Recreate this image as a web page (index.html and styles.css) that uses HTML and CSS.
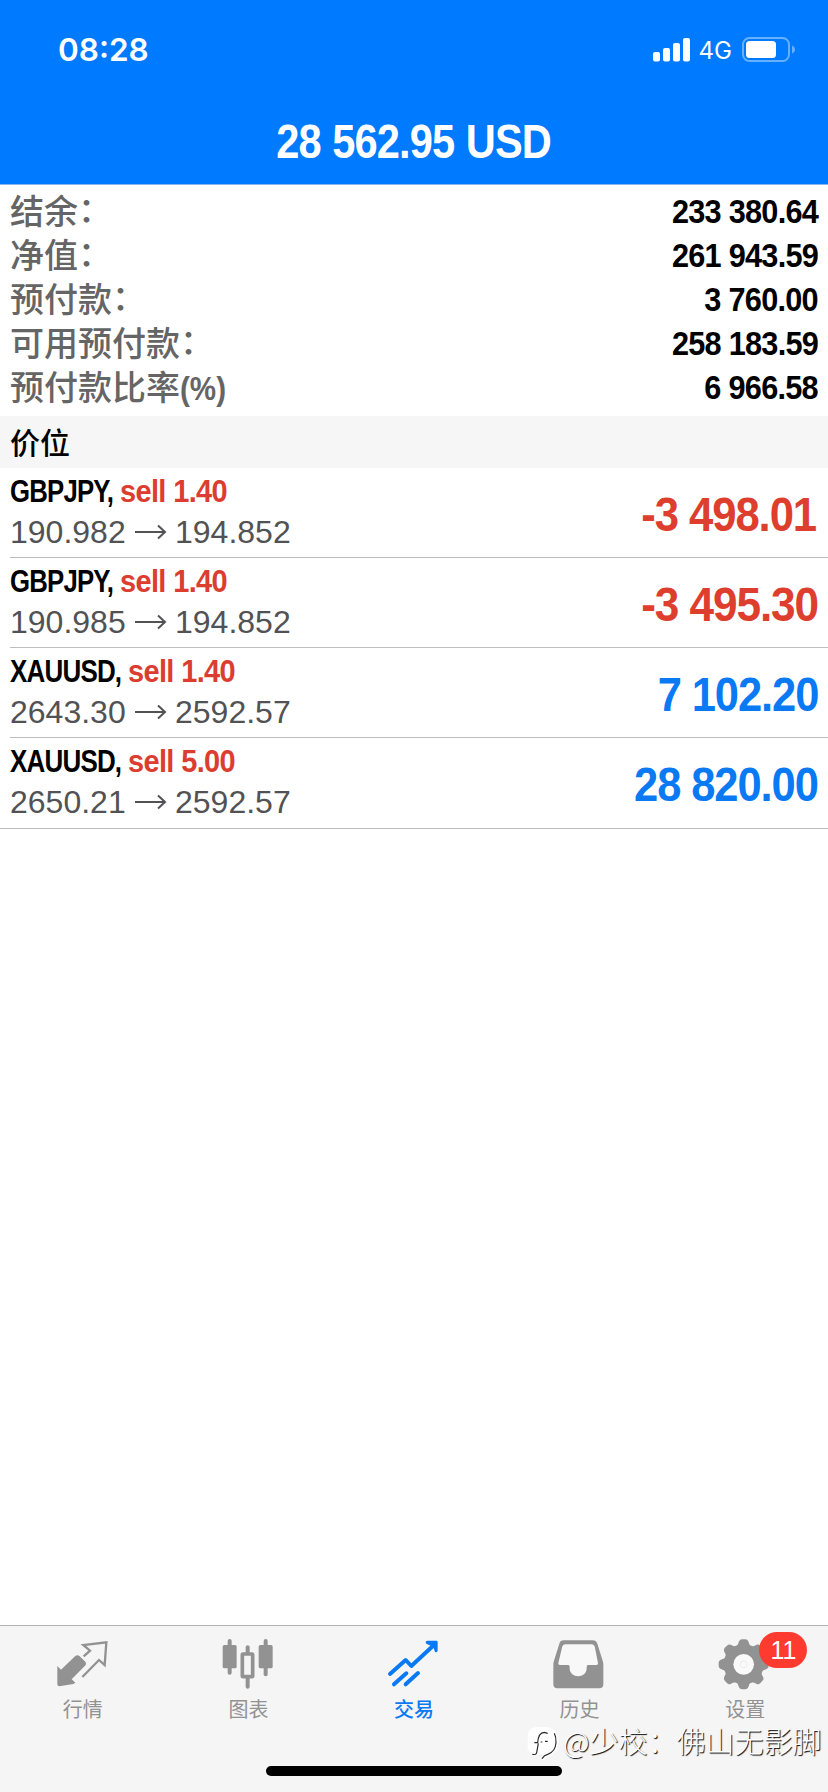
FILE: index.html
```html
<!DOCTYPE html>
<html lang="zh-CN">
<head>
<meta charset="utf-8">
<title>交易</title>
<link rel="stylesheet" href="styles.css">
</head>
<body>
<div class="app">
  <header class="header">
    <div class="status">
      <span class="clock">08:28</span>
      <div class="status-right">
        <svg class="signal" width="38" height="24" viewBox="0 0 38 24" fill="#fff"><rect x="0" y="14" width="7" height="9.500" rx="2"/><rect x="10" y="10" width="7" height="13.500" rx="2"/><rect x="20" y="5" width="7" height="18.500" rx="2"/><rect x="30" y="0" width="7" height="23.500" rx="2"/></svg>
        <span class="network">4G</span>
        <svg class="battery" width="54" height="26" viewBox="0 0 54 26"><rect x="1" y="1" width="46" height="23" rx="6.500" fill="none" stroke="#66b0ff" stroke-width="2"/><rect x="4" y="4" width="30" height="17" rx="3.500" fill="#fff"/><path d="M50 8.500c4 1.500 4 6.500 0 8z" fill="#66b0ff"/></svg>
      </div>
    </div>
    <h1 class="total"><span class="squeeze">28 562.95 USD</span></h1>
  </header>

  <section class="summary">
    <div class="line"><span class="label">结余<i class="colon">：</i></span><span class="value">233 380.64</span></div>
    <div class="line"><span class="label">净值<i class="colon">：</i></span><span class="value">261 943.59</span></div>
    <div class="line"><span class="label">预付款<i class="colon">：</i></span><span class="value">3 760.00</span></div>
    <div class="line"><span class="label">可用预付款<i class="colon">：</i></span><span class="value">258 183.59</span></div>
    <div class="line"><span class="label">预付款比率<span class="percent">(%)</span></span><span class="value">6 966.58</span></div>
  </section>

  <h2 class="section-title">价位</h2>

  <ul class="positions">
    <li class="position">
      <div class="detail">
        <div class="name"><span class="symbol gbp">GBPJPY,</span><span class="side">sell 1.40</span></div>
        <div class="prices"><span class="open">190.982</span><svg class="arrow" width="32" height="16" viewBox="0 0 32 16"><path d="M0 8H30M23 1.500L30 8L23 14.500"/></svg><span>194.852</span></div>
      </div>
      <span class="profit loss ends-in-one">-3 498.01</span>
    </li>
    <li class="position">
      <div class="detail">
        <div class="name"><span class="symbol gbp">GBPJPY,</span><span class="side">sell 1.40</span></div>
        <div class="prices"><span class="open">190.985</span><svg class="arrow" width="32" height="16" viewBox="0 0 32 16"><path d="M0 8H30M23 1.500L30 8L23 14.500"/></svg><span>194.852</span></div>
      </div>
      <span class="profit loss">-3 495.30</span>
    </li>
    <li class="position">
      <div class="detail">
        <div class="name"><span class="symbol xau">XAUUSD,</span><span class="side">sell 1.40</span></div>
        <div class="prices"><span class="open">2643.30</span><svg class="arrow" width="32" height="16" viewBox="0 0 32 16"><path d="M0 8H30M23 1.500L30 8L23 14.500"/></svg><span>2592.57</span></div>
      </div>
      <span class="profit">7 102.20</span>
    </li>
    <li class="position">
      <div class="detail">
        <div class="name"><span class="symbol xau">XAUUSD,</span><span class="side">sell 5.00</span></div>
        <div class="prices"><span class="open">2650.21</span><svg class="arrow" width="32" height="16" viewBox="0 0 32 16"><path d="M0 8H30M23 1.500L30 8L23 14.500"/></svg><span>2592.57</span></div>
      </div>
      <span class="profit">28 820.00</span>
    </li>
  </ul>

  <nav class="tabs">
    <a class="tab">
      <svg class="icon" viewBox="167 80 162 162"><path d="M171 167L182 178L224 138Q231 132 238 138L255 154Q260 160 254 166L214 207L225 217L219 221L177 228Q171 228 171 222Z" fill="#929292"/><path d="M250 138L269 121L249 104L318 96L313 164L296 149L246 200" fill="none" stroke="#929292" stroke-width="7"/></svg>
      <span>行情</span>
    </a>
    <a class="tab">
      <svg class="icon" viewBox="664 80 162 162" fill="#929292"><rect x="669" y="104" width="42" height="70" rx="5"/><rect x="684" y="86" width="12" height="107" rx="6"/><rect x="777" y="104" width="42" height="70" rx="5"/><rect x="792" y="86" width="12" height="112" rx="6"/><rect x="738" y="105" width="12" height="32" rx="6"/><rect x="738" y="194" width="12" height="41" rx="6"/><rect x="728" y="131" width="31" height="68" rx="2" fill="#f5f5f5" stroke="#929292" stroke-width="11"/></svg>
      <span>图表</span>
    </a>
    <a class="tab active">
      <svg class="icon" viewBox="171 80 162 162" fill="none" stroke="#0a7af4" stroke-width="12" stroke-linecap="round" stroke-linejoin="round"><path d="M180 191L227 149L244 167L311 105M192 222L229 189M227 222L264 188"/><path d="M292 91H319Q323 91 323 95V121Q321 127 315 125L310 110L289 100Q284 93 292 91Z" fill="#0a7af4" stroke="none"/></svg>
      <span>交易</span>
    </a>
    <a class="tab">
      <svg class="icon" viewBox="668 80 162 162"><path fill="#929292" d="M700 90H787Q797 90 801 100L817 151Q819 157 819 163V222Q819 234 807 234H681Q669 234 669 222V163Q669 157 671 151L687 100Q690 90 700 90Z"/><path fill="#f8f8f8" d="M705 102H784Q790 102 793 108L803 158Q804 164 798 164H773Q769 164 769 170V174C769 206 718 206 718 174V170Q718 164 714 164H689Q683 164 684 158L696 108Q699 102 705 102Z"/></svg>
      <span>历史</span>
    </a>
    <a class="tab">
      <svg class="icon" viewBox="595 80 162 162" fill="#929292"><defs><path id="tooth" d="M643 112C655 107 655 101 658 93Q661 87 667 87H677Q683 87 686 93C689 101 689 107 701 112V150H643Z"/></defs><circle cx="672" cy="162" r="60"/><use href="#tooth"/><use href="#tooth" transform="rotate(45 672 162)"/><use href="#tooth" transform="rotate(90 672 162)"/><use href="#tooth" transform="rotate(135 672 162)"/><use href="#tooth" transform="rotate(180 672 162)"/><use href="#tooth" transform="rotate(225 672 162)"/><use href="#tooth" transform="rotate(270 672 162)"/><use href="#tooth" transform="rotate(315 672 162)"/><circle cx="672" cy="162" r="31" fill="#fafafa"/><circle cx="672" cy="162" r="10" fill="none" stroke="#f0f0f0" stroke-width="4"/></svg>
      <span>设置</span>
      <b class="badge">11</b>
    </a>
  </nav>
  <div class="home-bar"></div>
  <div class="watermark">
    <svg width="34" height="34" viewBox="16 16 102 102"><rect x="18" y="19" width="84" height="84" rx="26" fill="#fff"/><path d="M92 30Q104 44 104 64Q104 94 78 102L60 114" fill="none" stroke="#fff" stroke-width="12"/><path d="M98 38Q104 50 103 66Q101 93 78 101Q68 103 61 114M38 66H48Q50 36 68 35L78 38M70 62H78M57 64H62M50 68L45 96Q44 103 32 101" fill="none" stroke="#2a2a2a" stroke-width="3.500"/></svg>
    <span>@少校：佛山无影脚</span>
  </div>
</div>
</body>
</html>
```
FILE: styles.css
```css
* { box-sizing: border-box; }
body { margin: 0; background: #fff; font-family: "Liberation Sans", "Noto Sans CJK SC", sans-serif; }
.app { position: relative; display: flex; flex-direction: column; width: 828px; height: 1792px; overflow: hidden; }

.header { height: 185px; background: #007aff; border-bottom: 1px solid #8ab6ea; color: #fff; flex: none; }
.status { display: flex; justify-content: space-between; align-items: center; height: 100px; padding: 0 32px 0 58px; }
.clock { font: 600 31.500px/40px Inter, sans-serif; letter-spacing: 0; }
.status-right { display: flex; align-items: center; }
.network { margin: 2px 10px 0 8px; font: 400 24px/28px Inter, sans-serif; }
.total { margin: 0; height: 84px; display: flex; justify-content: center; font-size: 48px; line-height: 84px; white-space: nowrap; }
.squeeze { letter-spacing: -1px; word-spacing: 1px; margin-right: 1px; transform: scaleX(0.866); }

.summary { height: 231px; padding: 4px 10px 0; flex: none; }
.line { display: flex; justify-content: space-between; height: 44px; line-height: 44px; font-size: 34px; white-space: nowrap; }
.label { height: 42px; line-height: 42px; color: #656565; font-family: "Noto Sans CJK SC", sans-serif; font-weight: 500; }
.colon { display: inline-block; height: 42px; line-height: 37px; vertical-align: top; font-style: normal; }
.percent { display: inline-block; font-family: "Liberation Sans", sans-serif; font-weight: 700; transform: scaleX(0.87); transform-origin: left; }
.value { font-weight: 700; letter-spacing: -0.800px; transform: scaleX(0.902); transform-origin: right; }

.section-title { margin: 0; height: 52px; flex: none; padding-left: 10px; background: #f6f6f6; font: 500 30px/50px "Noto Sans CJK SC", sans-serif; }

.positions { list-style: none; margin: 0; padding: 0; border-bottom: 1px solid #bdbdbf; }
.position { display: flex; justify-content: space-between; height: 90px; margin-left: 10px; padding-right: 10px; white-space: nowrap; border-bottom: 1px solid #bdbdbf; }
.position:last-child { border-bottom: 0; }
.name { display: flex; height: 46px; font-size: 32px; line-height: 46px; font-weight: 700; }
.symbol { letter-spacing: -1px; transform-origin: left; }
.gbp { width: 110px; transform: scaleX(0.805); }
.xau { width: 118px; transform: scaleX(0.812); }
.side { color: #db3d31; letter-spacing: -0.700px; transform: scaleX(0.905); transform-origin: left; }
.prices { display: flex; align-items: center; height: 36px; font-size: 32px; line-height: 36px; color: #525254; }
.open { width: 125px; }
.arrow { margin-right: 8px; fill: none; stroke: #525254; stroke-width: 2; }
.profit { color: #0a7af4; font-size: 48px; font-weight: 700; line-height: 93px; letter-spacing: -1.200px; transform: scaleX(0.906); transform-origin: right; }
.loss { color: #de3e2d; transform: scaleX(0.921); }
.ends-in-one { margin-right: 2px; transform: scaleX(0.91); }

.tabs { display: grid; grid-template-columns: repeat(5, 1fr); height: 167px; margin-top: auto; flex: none; background: #f5f5f5; border-top: 1px solid #b2b2b2; }
.tab { position: relative; display: flex; flex-direction: column; align-items: center; padding-top: 11px; color: #929292; font: 400 20px/30px "Noto Sans CJK SC", sans-serif; }
.tab span { margin-top: 3px; }
.active { color: #0a7af4; font-weight: 500; }
.icon { width: 54px; height: 54px; }
.badge { position: absolute; left: 97px; top: 6px; width: 48px; height: 36px; border-radius: 18px; background: #ff3b30; color: #fff; font: 400 25px/36px "Liberation Sans", sans-serif; text-align: center; }
.home-bar { position: absolute; left: 266px; bottom: 16px; width: 296px; height: 10px; border-radius: 5px; background: #000; }
.watermark { position: absolute; left: 527px; top: 1726px; display: flex; gap: 2px; height: 34px; color: #fff; font: 300 29px/29px "Noto Sans CJK SC", sans-serif; white-space: nowrap; text-shadow: 1px 1px 1px #000; }
```
